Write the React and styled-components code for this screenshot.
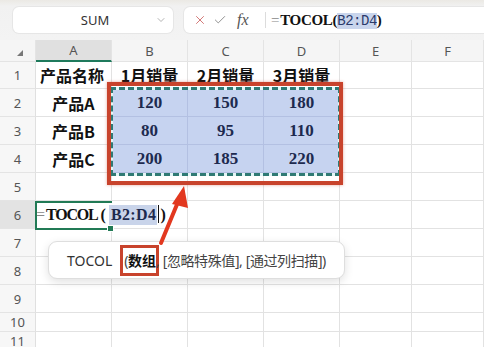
import React from 'react';
import styled, { createGlobalStyle } from 'styled-components';
import { X, Check, ChevronDown } from 'lucide-react';

const GlobalStyle = createGlobalStyle`
  html, body {
    margin: 0;
    padding: 0;
    background: #ffffff;
  }
  body {
    width: 484px;
    height: 347px;
    overflow: hidden;
    font-family: "Noto Sans", "Noto Sans CJK SC", sans-serif;
  }
`;

const Page = styled.div`
  position: relative;
  width: 484px;
  height: 347px;
  overflow: hidden;
`;

const TopBar = styled.div`
  height: 40px;
  box-sizing: border-box;
  display: flex;
  align-items: center;
  gap: 11px;
  padding: 0 0 0 13px;
  background: linear-gradient(#ebe9e4 0px, #f1f1f1 6px, #f3f3f3 100%);
`;

const NameBox = styled.div`
  width: 160px;
  height: 26px;
  box-sizing: border-box;
  background: #fff;
  border-radius: 6px;
  display: grid;
  grid-template-columns: 1fr auto;
  align-items: center;
  padding: 0 6px 0 22px;
  font-family: "Noto Sans", sans-serif;
  font-size: 13px;
  color: #333;
  text-align: center;
  box-shadow: 0 0 0 1px #e6e6e6;
`;

const FormulaBox = styled.div`
  flex: 1;
  height: 26px;
  box-sizing: border-box;
  background: #fff;
  border-radius: 6px 0 0 6px;
  display: flex;
  align-items: center;
  padding-left: 9px;
  box-shadow: 0 0 0 1px #e6e6e6;
`;

const IconSlot = styled.span`
  display: flex;
  align-items: center;
  width: ${p => p.$w || 18}px;
  color: ${p => p.$color || '#777'};
`;

const Fx = styled.span`
  font-family: "Liberation Serif", serif;
  font-style: italic;
  font-size: 16px;
  color: #555;
  width: 24px;
  padding-left: 6px;
`;

const Divider = styled.span`
  width: 1px;
  height: 16px;
  background: #dcdcdc;
  margin: 0 5px 0 4px;
`;

const FormulaText = styled.span`
  font-family: "Liberation Serif", serif;
  font-weight: 700;
  font-size: 15px;
  color: #111;
  white-space: nowrap;
  letter-spacing: -0.3px;
`;

const Eq = styled.span`
  font-weight: 400;
  color: #888;
  margin-right: 1px;
`;

const Ref = styled.span`
  font-family: "Liberation Mono", monospace;
  font-weight: 400;
  font-size: 14px;
  background: #c9d5ec;
  color: #2a3a6a;
  letter-spacing: -0.5px;
`;

const Sheet = styled.div`
  display: grid;
  grid-template-columns: 36px 76px 76px 76px 76px 72px 72px;
  grid-template-rows: 22px 27px repeat(8, 28px) 19px 19px;
`;

const Cell = styled.div`
  box-sizing: border-box;
  border-right: 1px solid ${p => (p.$sel ? '#b3c0e2' : '#e2e2e2')};
  border-bottom: 1px solid ${p => (p.$sel ? '#b3c0e2' : '#e2e2e2')};
  background: ${p => (p.$sel ? '#c6d3f0' : 'transparent')};
  display: flex;
  align-items: center;
  justify-content: ${p => (p.$left ? 'flex-start' : 'center')};
  padding-left: ${p => (p.$left ? '4px' : '0')};
  font-family: ${p => (p.$num ? '"Liberation Serif", serif' : '"Noto Sans CJK SC", sans-serif')};
  font-weight: 700;
  font-size: ${p => (p.$num ? '17px' : '16px')};
  color: ${p => (p.$sel ? '#1d2a4f' : '#111')};
  white-space: nowrap;
  overflow: visible;
`;

const FormulaCell = styled(Cell)`
  border-right: none;
  padding-left: 0;
`;

const Head = styled.div`
  box-sizing: border-box;
  background: ${p => (p.$on ? '#e0e0e0' : '#f5f5f5')};
  border-right: 1px solid #e4e4e4;
  border-bottom: ${p => (p.$on ? '2px solid #1f7a5c' : '1px solid #e4e4e4')};
  display: flex;
  align-items: center;
  justify-content: center;
  font-family: "Noto Sans", sans-serif;
  font-size: 13px;
  color: #555;
`;

const RowHead = styled(Head)`
  background: ${p => (p.$on ? '#e3e3e3' : '#f7f7f7')};
  border-bottom: 1px solid #e4e4e4;
  border-right: 1px solid #e0e0e0;
`;

const Corner = styled(Head)`
  &::after {
    content: '';
    width: 0;
    height: 0;
    border-left: 6px solid transparent;
    border-bottom: 6px solid #777;
    margin: 4px 0 0 4px;
  }
`;

const CellFormula = styled.span`
  position: relative;
  z-index: 3;
  font-family: "Liberation Serif", serif;
  font-weight: 700;
  font-size: 16px;
  color: #111;
`;

const Fn = styled.span`
  letter-spacing: -1.2px;
  margin: 0 3px 0 0;
`;

const CellRef = styled.span`
  background: #c9d4ea;
  color: #1d2a4f;
  padding: 1px 1px 2px 2px;
  margin-left: 3px;
  letter-spacing: 0.4px;
`;

const Caret = styled.span`
  display: inline-block;
  width: 1px;
  height: 18px;
  background: #111;
  vertical-align: -3px;
  margin: 0 1px;
`;

const RedFrame = styled.div`
  position: absolute;
  left: 107px;
  top: 82px;
  width: 236px;
  height: 103px;
  box-sizing: border-box;
  border: 4px solid #c8432c;
  box-shadow: 0 0 3px rgba(200, 67, 44, 0.45);
  z-index: 5;
`;

const Marquee = styled.div`
  position: absolute;
  left: 110px;
  top: 87px;
  width: 231px;
  height: 89px;
  box-sizing: border-box;
  border: 3px solid #e4f6f6;
  z-index: 4;
  &::after {
    content: '';
    position: absolute;
    inset: -3px;
    border: 3px dashed #2f7a74;
  }
`;

const ActiveCell = styled.div`
  position: absolute;
  left: 35px;
  top: 201px;
  width: 77px;
  height: 29px;
  box-sizing: border-box;
  border: 2px solid #217a55;
  border-right: none;
  z-index: 4;
  &::after {
    content: '';
    position: absolute;
    right: -2px;
    bottom: -4px;
    width: 5px;
    height: 5px;
    background: #217a55;
    border: 1px solid #fff;
  }
`;

const Tip = styled.div`
  position: absolute;
  left: 48px;
  top: 241px;
  width: 297px;
  height: 38px;
  box-sizing: border-box;
  background: #fff;
  border: 1px solid #dedede;
  border-radius: 9px;
  box-shadow: 0 3px 10px rgba(0, 0, 0, 0.12);
  display: flex;
  align-items: center;
  padding-left: 18px;
  font-family: "Noto Sans", "Noto Sans CJK SC", sans-serif;
  font-size: 14px;
  color: #333;
  white-space: nowrap;
  z-index: 6;
`;

const TipName = styled.span`
  margin-right: 12px;
`;

const TipArg = styled.span`
  position: relative;
  font-weight: ${p => (p.$cur ? 700 : 400)};
  color: ${p => (p.$cur ? '#111' : '#444')};
  letter-spacing: ${p => (p.$cur ? '0' : '-0.4px')};
`;

const Highlight = styled.span`
  position: relative;
  &::before {
    content: '';
    position: absolute;
    left: -4px;
    right: -3px;
    top: -5px;
    bottom: -6px;
    border: 3px solid #c8432c;
  }
`;

const Arrow = styled.svg`
  position: absolute;
  left: 150px;
  top: 180px;
  z-index: 7;
`;

const cols = ['A', 'B', 'C', 'D', 'E', 'F'];

const data = [
  ['产品名称', '1月销量', '2月销量', '3月销量'],
  ['产品A', '120', '150', '180'],
  ['产品B', '80', '95', '110'],
  ['产品C', '200', '185', '220'],
];

const renderRow = r => {
  const out = [<RowHead key={'h' + r} $on={r === 6}>{r}</RowHead>];
  cols.forEach((c, ci) => {
    const key = c + r;
    const v = r <= 4 ? data[r - 1][ci] : undefined;
    const sel = r >= 2 && r <= 4 && ci >= 1 && ci <= 3;
    if (r === 6 && ci === 0) {
      out.push(
        <FormulaCell key={key} $left>
          <CellFormula>
            <Eq>=</Eq>
            <Fn>TOCOL</Fn>(<CellRef>B2:D4</CellRef>
            <Caret />)
          </CellFormula>
        </FormulaCell>
      );
      return;
    }
    out.push(
      <Cell key={key} $sel={sel} $num={sel} $left={r === 1 && ci === 0}>
        {v}
      </Cell>
    );
  });
  return out;
};

export default function App() {
  return (
    <Page>
      <GlobalStyle />
      <TopBar>
        <NameBox>
          <span>SUM</span>
          <ChevronDown size={12} color="#999" strokeWidth={1.5} />
        </NameBox>
        <FormulaBox>
          <IconSlot $color="#d0706f" $w={20}>
            <X size={14} strokeWidth={1.6} />
          </IconSlot>
          <IconSlot $color="#8a8a8a" $w={18}>
            <Check size={14} strokeWidth={1.6} />
          </IconSlot>
          <Fx>fx</Fx>
          <Divider />
          <FormulaText>
            <Eq>=</Eq>TOCOL(<Ref>B2:D4</Ref>)
          </FormulaText>
        </FormulaBox>
      </TopBar>

      <Sheet>
        <Corner />
        {cols.map(c => (
          <Head key={c} $on={c === 'A'}>{c}</Head>
        ))}
        {Array.from({ length: 11 }, (_, i) => renderRow(i + 1))}
      </Sheet>

      <Marquee />
      <RedFrame />
      <ActiveCell />

      <Tip>
        <TipName>TOCOL</TipName>
        <Highlight>
          <TipArg>(</TipArg>
          <TipArg $cur>数组</TipArg>
        </Highlight>
        <TipArg>, [忽略特殊值], [通过列扫描])</TipArg>
      </Tip>

      <Arrow width="45" height="70" viewBox="0 0 45 70">
        <line x1="11" y1="63" x2="28" y2="22" stroke="#e2381f" strokeWidth="4" strokeLinecap="round" />
        <polygon points="34,6 22,24 38,28" fill="#e2381f" />
      </Arrow>
    </Page>
  );
}
